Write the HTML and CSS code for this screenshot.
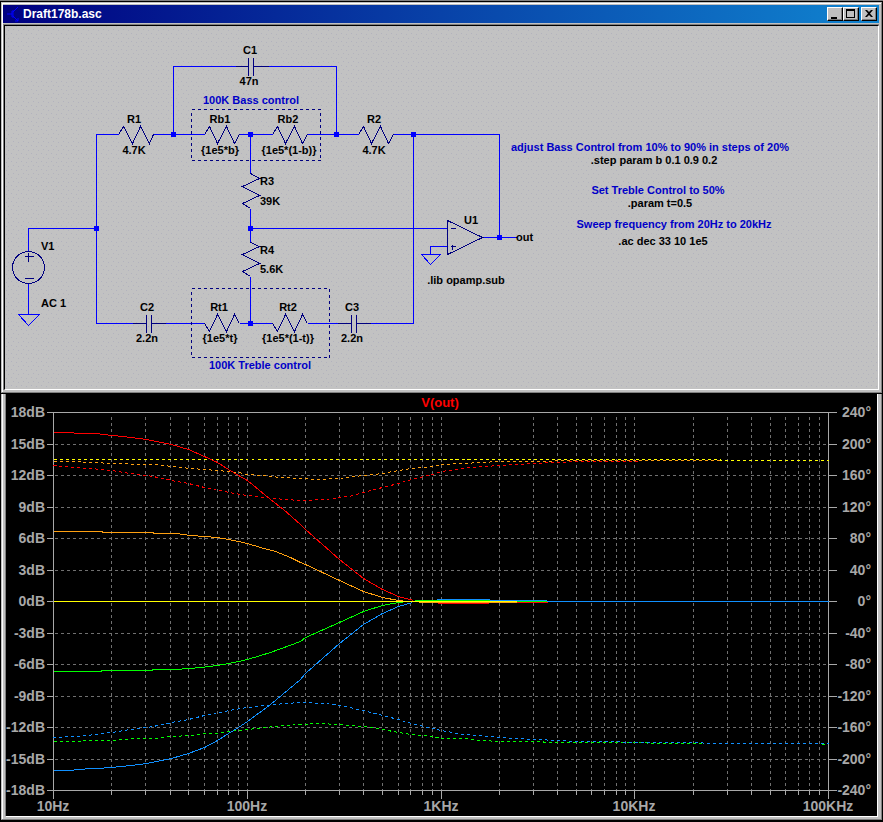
FILE: index.html
```
<!DOCTYPE html>
<html lang="en">
<head>
    <meta charset="UTF-8">
    <meta name="viewport" content="width=device-width, initial-scale=1.0">
    <title>Draft178b.asc</title>
    <link rel="stylesheet" href="styles.css">
</head>
<body>
    <main class="workspace">
        <section class="window">
            <header class="title-bar">
                <svg class="app-icon" viewBox="0 0 14 16" aria-hidden="true">
                    <path d="M1 8H6M7 4V12M6 5V11M7 6L12 1M7 10L12 15M12 12V15H9"/>
                </svg>
                <h1>Draft178b.asc</h1>
                <div class="window-buttons">
                    <button type="button" aria-label="Minimize"><svg viewBox="0 0 12 10"><path d="M2 8H8V10H2Z"/></svg></button>
                    <button type="button" aria-label="Maximize"><svg viewBox="0 0 12 10"><path fill-rule="evenodd" d="M1 0H10V9H1ZM2 2V8H9V2Z"/></svg></button>
                    <button type="button" class="close" aria-label="Close"><svg viewBox="0 0 12 10"><path d="M2 1H4L6 3L8 1H10L7 4.5L10 8H8L6 6L4 8H2L5 4.500Z"/></svg></button>
                </div>
            </header>

            <svg class="schematic" viewBox="5 26 873 363" role="img" aria-label="Tone control schematic">
                <defs>
                    <pattern id="dither" width="10" height="8" patternUnits="userSpaceOnUse">
                        <path class="speck" d="M1 1h1v1h-1zM6 2h1v1h-1zM3 5h1v1h-1zM8 6h1v1h-1z"/>
                    </pattern>
                </defs>
                <rect x="5" y="26" width="873" height="363" fill="url(#dither)"/>

                <g transform="translate(0.5 0.5)">
                    <!-- wires -->
                    <path class="wire" d="M28 250V228H96M118 134H96V323H132M153 134H204M239 134H272M307 134H358M393 134H499V237
                        M173 134V66H235M268 66H336V134
                        M250 134V173M250 208V242M250 276V323M250 228H447
                        M165 323H204M239 323H272M307 323H337M370 323H413V134
                        M447 246H430V254M482 237H516M28 283V314"/>
                    <!-- grounds -->
                    <path class="wire" d="M18 314H39L28 325ZM421 254H440L430 264Z"/>

                    <!-- resistors -->
                    <path class="part" d="M118 134L123 126L132 143L140 126L149 143L153 134
                        M204 134L209 126L217 143L226 126L234 143L239 134
                        M272 134L277 126L285 143L294 126L302 143L307 134
                        M358 134L363 126L371 143L380 126L388 143L393 134
                        M204 323L209 331L217 314L226 331L234 314L239 323
                        M272 323L277 331L285 314L294 331L302 314L307 323
                        M250 173L259 178L242 186L259 195L242 203L250 208
                        M250 242L259 246L242 254L259 263L242 271L250 276"/>
                    <!-- capacitors -->
                    <path class="part" d="M235 66H248M248 57V75M253 57V75M253 66H268
                        M132 323H146M146 314V332M151 314V332M151 323H165
                        M337 323H351M351 314V332M356 314V332M356 323H370"/>
                    <!-- source and op amp -->
                    <circle class="part" cx="28" cy="267" r="16"/>
                    <path class="part" d="M24 256H33M28 252V261M24 278H33"/>
                    <path class="part" d="M447 220V254L482 237ZM450 228H455M450 246H455M452 244V249"/>

                    <path class="outline" d="M191 109H320V160H191ZM191 288H329V357H191Z"/>
                </g>
                <path class="node" d="M171 132h5v5h-5zM248 132h5v5h-5zM334 132h5v5h-5zM411 132h5v5h-5z
                    M94 226h5v5h-5zM248 226h5v5h-5zM248 321h5v5h-5zM497 235h5v5h-5z"/>

                <g class="labels">
                    <text x="250" y="54">C1</text>
                    <text x="249" y="85">47n</text>
                    <text x="134" y="123">R1</text>
                    <text x="134" y="154">4.7K</text>
                    <text x="220" y="123">Rb1</text>
                    <text x="220" y="154">{1e5*b}</text>
                    <text x="288" y="123">Rb2</text>
                    <text x="289" y="154">{1e5*(1-b)}</text>
                    <text x="374" y="123">R2</text>
                    <text x="374" y="154">4.7K</text>
                    <text x="147" y="311">C2</text>
                    <text x="147" y="342">2.2n</text>
                    <text x="219" y="311">Rt1</text>
                    <text x="220" y="342">{1e5*t}</text>
                    <text x="288" y="311">Rt2</text>
                    <text x="288" y="342">{1e5*(1-t)}</text>
                    <text x="352" y="311">C3</text>
                    <text x="352" y="342">2.2n</text>
                    <text x="471" y="224">U1</text>
                    <text x="466" y="284">.lib opamp.sub</text>
                    <text x="654" y="164">.step param b 0.1 0.9 0.2</text>
                    <text x="660" y="207">.param t=0.5</text>
                    <text x="663" y="245">.ac dec 33 10 1e5</text>
                </g>
                <g class="labels start">
                    <text x="260" y="185">R3</text>
                    <text x="260" y="205">39K</text>
                    <text x="260" y="254">R4</text>
                    <text x="260" y="273">5.6K</text>
                    <text x="41" y="250">V1</text>
                    <text x="41" y="307">AC 1</text>
                    <text x="516" y="241">out</text>
                </g>
                <g class="labels comment">
                    <text x="251" y="104">100K Bass control</text>
                    <text x="260" y="369">100K Treble control</text>
                    <text x="650" y="151">adjust Bass Control from 10% to 90% in steps of 20%</text>
                    <text x="658" y="194">Set Treble Control to 50%</text>
                    <text x="674" y="228">Sweep frequency from 20Hz to 20kHz</text>
                </g>
            </svg>
        </section>

        <section class="window plot-window">
            <svg class="plot" viewBox="6 394 871 422" role="img" aria-label="Frequency response of V(out)">
                <g transform="translate(0.5 0.5)">
                    <path class="grid" d="M54 444H828M54 475H828M54 507H828M54 538H828M54 570H828
                        M54 633H828M54 664H828M54 696H828M54 727H828M54 759H828"/>
                    <path class="grid" d="M111 416V790M145 416V790M170 416V790M188 416V790M204 416V790M217 416V790M228 416V790M238 416V790M247 416V790
                        M305 416V790M339 416V790M363 416V790M382 416V790M398 416V790M410 416V790M422 416V790M432 416V790M441 416V790
                        M499 416V790M533 416V790M557 416V790M576 416V790M591 416V790M604 416V790M616 416V790M625 416V790M634 416V790
                        M693 416V790M727 416V790M751 416V790M770 416V790M785 416V790M798 416V790M809 416V790M819 416V790"/>
                    <path class="axis" d="M46 412H836M46 790H836M53 412V798M828 412V798
                        M46 444H53M46 475H53M46 507H53M46 538H53M46 570H53M46 601H53M46 633H53M46 664H53M46 696H53M46 727H53M46 759H53
                        M828 444H836M828 475H836M828 507H836M828 538H836M828 570H836M828 601H836M828 633H836M828 664H836M828 696H836M828 727H836M828 759H836
                        M111 790V794M145 790V794M170 790V794M188 790V794M204 790V794M217 790V794M228 790V794M238 790V794M247 790V798
                        M305 790V794M339 790V794M363 790V794M382 790V794M398 790V794M410 790V794M422 790V794M432 790V794M441 790V798
                        M499 790V794M533 790V794M557 790V794M576 790V794M591 790V794M604 790V794M616 790V794M625 790V794M634 790V798
                        M693 790V794M727 790V794M751 790V794M770 790V794M785 790V794M798 790V794M809 790V794M819 790V794"/>

                    <!-- phase -->
                    <path class="trace phase red" d="M53 465L75 467L90 468L111 470L130 473L147 475L163 478L171 480L188 483L204 487L217 489L228 492L247 495L263 497L285 499L300 500L325 499L339 497L349 496L363 492L382 487L398 483L411 479L432 474L441 471L455 469L467 467L500 465L533 463L577 461H640"/>
                    <path class="trace phase orange" d="M53 461H78L84 462L120 463L135 464H155L171 466L190 468L204 469L217 470L238 472L247 474L262 475L280 477L300 478L317 479L339 478L363 475L382 473L398 470L411 468L432 466L441 464L463 463L480 462L500 461H533L577 460H720"/>
                    <path class="trace phase yellow" d="M53 459H720V460H828"/>
                    <path class="trace phase green" d="M53 741H78L84 740H111L135 738H155L171 736L190 735L204 733H217L228 731L247 729L265 727L285 725L300 724L317 723L339 724L363 726L382 729L398 732L411 734L432 736L441 738H463L480 740L500 741H540L546 742H640L653 743H703M821 744H824"/>
                    <path class="trace phase blue" d="M53 737L77 736L95 734L111 732L130 729L147 727L163 724L171 722L188 719L204 715L217 713L228 710L247 707L265 705L285 703L300 702L325 703L339 705L363 710L382 715L398 719L411 723L432 728L441 730L463 734L490 736L500 737L533 739L560 740L577 741H600L640 742H700L705 743H828"/>

                    <!-- magnitude -->
                    <path class="trace red" d="M53 432H73L74 433H96L111 435L123 436L146 439L171 444L188 449L204 456L217 462L228 469L238 475L247 480L270 499L283 509L300 524L305 529L339 559L363 578L382 589L398 596L413 600M437 603H488M489 602H547"/>
                    <path class="trace orange" d="M53 531H102V532H153V533H176L190 535L204 536L217 537L228 539L238 541L247 543L260 547L275 551L290 557L300 562L305 564L339 580L363 591L382 597L398 600H402M418 602H516"/>
                    <path class="trace blue" d="M53 770H73L74 769L96 768L111 767L131 765L146 763L171 758L188 753L204 747L217 740L228 733L238 727L247 721L270 704L300 679L305 673L339 643L363 624L382 613L398 606L412 602M436 599H489M489 600H546M546 601H828"/>
                    <path class="trace green" d="M53 671H101V670H152V669H175L188 668L201 667L217 665L228 663L238 661L247 659L270 652L300 641L305 637L339 622L363 611L382 605L398 602H402M414 600H489M516 601H546"/>
                    <path class="trace yellow" d="M53 601H516"/>
                </g>

                <text class="plot-title" x="440" y="407">V(out)</text>
                <g class="scale left">
                    <text x="45" y="417">18dB</text>
                    <text x="45" y="449">15dB</text>
                    <text x="45" y="480">12dB</text>
                    <text x="45" y="512">9dB</text>
                    <text x="45" y="543">6dB</text>
                    <text x="45" y="575">3dB</text>
                    <text x="45" y="606">0dB</text>
                    <text x="45" y="638">-3dB</text>
                    <text x="45" y="669">-6dB</text>
                    <text x="45" y="701">-9dB</text>
                    <text x="45" y="732">-12dB</text>
                    <text x="45" y="764">-15dB</text>
                    <text x="45" y="795">-18dB</text>
                </g>
                <g class="scale right">
                    <text x="871" y="417">240°</text>
                    <text x="871" y="449">200°</text>
                    <text x="871" y="480">160°</text>
                    <text x="871" y="512">120°</text>
                    <text x="871" y="543">80°</text>
                    <text x="871" y="575">40°</text>
                    <text x="871" y="606">0°</text>
                    <text x="871" y="638">-40°</text>
                    <text x="871" y="669">-80°</text>
                    <text x="871" y="701">-120°</text>
                    <text x="871" y="732">-160°</text>
                    <text x="871" y="764">-200°</text>
                    <text x="871" y="795">-240°</text>
                </g>
                <g class="scale bottom">
                    <text x="53" y="811">10Hz</text>
                    <text x="247" y="811">100Hz</text>
                    <text x="441" y="811">1KHz</text>
                    <text x="634" y="811">10KHz</text>
                    <text x="828" y="811">100KHz</text>
                </g>
            </svg>
        </section>
    </main>
</body>
</html>
```
FILE: styles.css
```
* {
    margin: 0;
    padding: 0;
    box-sizing: border-box;
}

body {
    font-family: "Liberation Sans", Arial, sans-serif;
    background: #000;
    border-top: 1px solid #808080;
}

svg {
    display: block;
}

.workspace {
    display: flex;
    flex-direction: column;
    gap: 1px;
    padding: 1px 1px 0;
}

.window {
    background: #c0c0c0;
    border: 1px solid #c0c0c0;
    border-right-color: #808080;
    border-bottom-color: #808080;
    box-shadow: inset 1px 1px #fff;
    padding: 2px 2px 2px 1px;
}

/* title bar */
.title-bar {
    display: flex;
    align-items: center;
    height: 18px;
    padding: 0 2px 0 3px;
    background: linear-gradient(90deg, #000080, #1084d0);
    color: #fff;
}

.title-bar h1 {
    flex: 1;
    font-size: 12px;
    line-height: 18px;
    font-weight: bold;
}

.app-icon {
    width: 14px;
    height: 16px;
    margin-right: 3px;
    fill: none;
    stroke: #00f;
}

.window-buttons {
    display: flex;
}

.window-buttons button {
    display: grid;
    place-items: center;
    width: 16px;
    height: 14px;
    background: #c0c0c0;
    border: 1px solid;
    border-color: #fff #000 #000 #fff;
    box-shadow: inset -1px -1px #808080;
}

.window-buttons .close {
    margin-left: 2px;
}

.window-buttons svg {
    width: 12px;
    height: 10px;
}

/* schematic */
.schematic {
    width: calc(100% - 1px);
    height: auto;
    margin: 2px 0 0 1px;
    background: #c2c2c2;
    border: 1px solid;
    border-color: #000 #fff #fff #000;
    outline: 1px solid #808080;
    clip-path: inset(-1px 0 0 -1px);
}

.speck {
    fill: #b2b2be;
}

.wire,
.part,
.outline {
    fill: none;
    stroke-width: 1;
    shape-rendering: crispEdges;
}

.wire {
    stroke: #0000ff;
}

.part {
    stroke: #000080;
}

.outline {
    stroke: #000080;
    stroke-dasharray: 3 3;
}

.node {
    fill: #0000ff;
}

.labels {
    font-size: 11px;
    font-weight: bold;
    text-anchor: middle;
}

.start {
    text-anchor: start;
}

.comment {
    fill: #0000c8;
}

/* plot */
.plot-window {
    border-top: 0;
    padding: 0 3px 2px;
    box-shadow: inset 1px 0 #fff;
}

.plot {
    width: 100%;
    height: auto;
    background: #000;
    border: 1px solid;
    border-color: #000 #fff #fff #808080;
    border-top: 0;
}

.grid,
.axis,
.trace {
    fill: none;
    stroke-width: 1;
    shape-rendering: crispEdges;
}

.grid {
    stroke: #707070;
    stroke-dasharray: 3 3;
}

.axis {
    stroke: #a8a8a8;
}

.phase {
    stroke-dasharray: 3 3;
}

.red {
    stroke: #ff0000;
}

.orange {
    stroke: #ffa010;
}

.yellow {
    stroke: #ffff00;
}

.green {
    stroke: #00ff00;
}

.blue {
    stroke: #1090ff;
}

.plot-title {
    fill: #ff0000;
    font-size: 13px;
    font-weight: bold;
    text-anchor: middle;
}

.scale {
    fill: #a8a8a8;
    font-size: 14px;
    font-weight: bold;
    text-anchor: end;
}

.bottom {
    text-anchor: middle;
}
```
